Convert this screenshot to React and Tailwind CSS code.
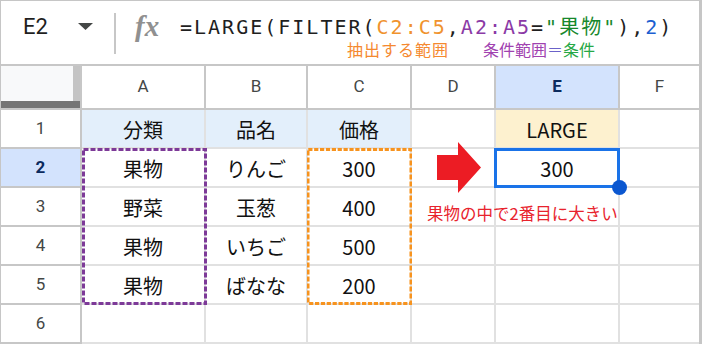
import React from 'react'

const cols = ['A', 'B', 'C', 'D', 'E', 'F']

const rows = [
  ['分類', '品名', '価格', '', 'LARGE', ''],
  ['果物', 'りんご', '300', '', '300', ''],
  ['野菜', '玉葱', '400', '', '', ''],
  ['果物', 'いちご', '500', '', '', ''],
  ['果物', 'ばなな', '200', '', '', ''],
  ['', '', '', '', '', ''],
]

function cellBg(r, c) {
  if (r === 0 && c <= 2) return 'bg-[#e3effb]'
  if (r === 0 && c === 4) return 'bg-[#fdf1cf]'
  return 'bg-white'
}

function DashedBox({ className, color }) {
  return (
    <svg className={`absolute ${className}`} viewBox="0 0 125 157" preserveAspectRatio="none">
      <rect x="1.5" y="1.5" width="122" height="154" fill="none" stroke={color} strokeWidth="3" strokeDasharray="5 2" />
    </svg>
  )
}

export default function App() {
  return (
    <div className="w-[702px] bg-white border-t border-l border-r-[3px] border-[#c6c6c6] overflow-hidden font-['Noto_Sans_CJK_JP',sans-serif]">
      {/* Formula bar */}
      <div className="flex h-[65px] border-b-2 border-[#c7c7c7]">
        <div className="flex h-[50px] w-[113px] items-center pl-[22px] font-['Roboto',sans-serif] text-[22px] text-[#1f1f1f]">
          <span>E2</span>
          <svg className="ml-[30px]" width="15" height="7" viewBox="0 0 15 7">
            <polygon points="0,0 15,0 7.5,7" fill="#444746" />
          </svg>
        </div>
        <div className="mt-[12px] h-[41px] w-[2px] bg-[#c7c7c7]" />
        <div className="flex h-[50px] w-[64px] items-center pl-[19px] pt-[2px] font-['Liberation_Serif',serif] text-[29px] font-bold italic text-[#909090]">
          fx
        </div>
        <div className="flex flex-col pt-[16px]">
          <div className="whitespace-pre font-['DejaVu_Sans_Mono','Noto_Sans_CJK_JP',monospace] text-[20px] leading-[20px] tracking-[2px] text-[#1f1f1f]">
            <span>=LARGE(FILTER(</span>
            <span className="text-[#f0932e]">C2:C5</span>
            <span>,</span>
            <span className="text-[#8b3aa6]">A2:A5</span>
            <span>=</span>
            <span className="text-[#17882c]">"果物"</span>
            <span>),</span>
            <span className="text-[#1c5fd1]">2</span>
            <span>)</span>
          </div>
          <div className="ml-[167px] flex whitespace-pre text-[16px] leading-[24px]">
            <span className="text-[#f5892f] tracking-[1px]">抽出する範囲</span>
            <span className="ml-[34px] text-[#a042b0]">条件範囲</span>
            <span className="text-[#6b62c9]">＝</span>
            <span className="text-[#27a845]">条件</span>
          </div>
        </div>
      </div>

      {/* Grid */}
      <div className="relative grid grid-cols-[81px_124px_102px_104px_84px_124px_79px] grid-rows-[44px_repeat(6,39px)]">
        {/* corner */}
        <div className="flex flex-col border-r-2 border-b-2 border-[#c7c7c7]">
          <div className="flex flex-1">
            <div className="flex-1 bg-[#f8f9fa]" />
            <div className="w-[7px] bg-[#c4c4c4]" />
          </div>
          <div className="h-[7px] bg-[#757575]" />
        </div>
        {cols.map((c, i) => (
          <div
            key={c}
            className={`flex items-center justify-center font-['Roboto',sans-serif] text-[17px] border-b-2 border-[#c7c7c7] ${
              i < 5 ? 'border-r-2' : ''
            } ${c === 'E' ? 'bg-[#d3e3fd] font-bold text-[#0b2a5e]' : 'bg-white text-[#444746]'}`}
          >
            {c}
          </div>
        ))}

        {rows.map((row, r) => (
          <React.Fragment key={r}>
            <div
              className={`flex items-center justify-center font-['Roboto',sans-serif] text-[17px] border-r-2 border-b-2 border-[#c7c7c7] ${
                r === 1 ? 'bg-[#d3e3fd] font-bold text-[#0b2a5e]' : 'bg-white text-[#444746]'
              }`}
            >
              {r + 1}
            </div>
            {row.map((v, c) => (
              <div
                key={c}
                className={`flex items-center justify-center pt-[2px] text-[20px] text-[#111] border-b-2 border-[#e1e1e1] ${
                  c < 5 ? 'border-r-2' : ''
                } ${cellBg(r, c)}`}
              >
                {v}
              </div>
            ))}
          </React.Fragment>
        ))}

        {/* overlays */}
        <DashedBox className="left-[81px] top-[82px] w-[125px] h-[157px]" color="#7d3a98" />
        <DashedBox className="left-[306px] top-[82px] w-[105px] h-[157px]" color="#f7931e" />

        <div className="absolute left-[493px] top-[82px] w-[126px] h-[40px] border-[3px] border-[#1a73e8]" />
        <div className="absolute left-[611px] top-[114px] w-[15px] h-[15px] rounded-full bg-[#0b57d0]" />

        <svg className="absolute left-[435px] top-[76px]" width="46" height="52" viewBox="0 0 46 52">
          <polygon points="1,13 22,13 22,0 45,25.5 22,51 22,38 1,38" fill="#ec1c24" />
        </svg>

        <div className="absolute left-[426px] top-[137px] whitespace-nowrap text-[16.5px] leading-[20px] text-[#e8232d]">
          果物の中で2番目に大きい
        </div>
      </div>
    </div>
  )
}
